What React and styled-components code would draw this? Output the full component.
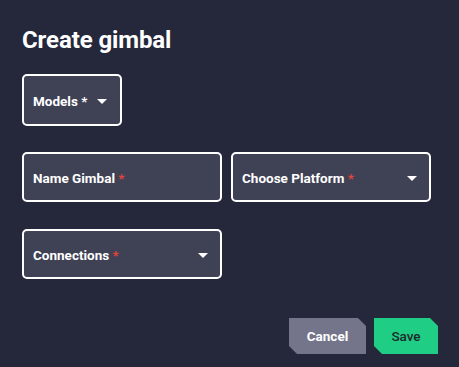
import React from "react";
import styled, { createGlobalStyle } from "styled-components";

const GlobalStyle = createGlobalStyle`
  html, body {
    margin: 0;
    padding: 0;
    background: #25273b;
  }
  body {
    font-family: Roboto, "Liberation Sans", sans-serif;
  }
`;

const Page = styled.div`
  width: 459px;
  height: 367px;
  box-sizing: border-box;
  padding: 26px 22px 0 22px;
  background: #25273b;
  display: flex;
  flex-direction: column;
`;

const Title = styled.h1`
  margin: 0;
  color: #ffffff;
  font-size: 24px;
  font-weight: 700;
  line-height: 28px;
  letter-spacing: -0.1px;
`;

const Row = styled.div`
  display: flex;
  gap: 9px;
  margin-top: ${(p) => p.top}px;
`;

const Field = styled.div`
  box-sizing: border-box;
  width: ${(p) => p.width}px;
  height: ${(p) => p.height}px;
  border: 2px solid #ffffff;
  border-radius: 5px;
  background: #3f4155;
  display: flex;
  align-items: center;
  justify-content: ${(p) => (p.tight ? "flex-start" : "space-between")};
  gap: ${(p) => (p.tight ? "10px" : "0")};
  padding: 1px 12px 0 9px;
  color: #ffffff;
  font-size: 13.5px;
  font-weight: 700;
  white-space: nowrap;
`;

const Req = styled.span`
  color: #e0443e;
`;

const Caret = styled.span`
  flex: none;
  width: 0;
  height: 0;
  border-left: 5px solid transparent;
  border-right: 5px solid transparent;
  border-top: 5px solid #ffffff;
  margin-top: 1px;
`;

const Actions = styled.div`
  display: flex;
  justify-content: flex-end;
  gap: 8px;
  margin-top: 39px;
  margin-right: -1px;
`;

const Button = styled.button`
  border: none;
  width: ${(p) => p.width}px;
  height: 36px;
  background: ${(p) => p.bg};
  color: ${(p) => p.fg};
  font-family: Roboto, "Liberation Sans", sans-serif;
  font-size: 13.5px;
  font-weight: ${(p) => p.weight};
  clip-path: polygon(0 0, calc(100% - 8px) 0, 100% 8px, 100% 100%, 8px 100%, 0 calc(100% - 8px));
  padding: 0;
  cursor: pointer;
`;

export default function App() {
  return (
    <>
      <GlobalStyle />
      <Page>
        <Title>Create gimbal</Title>
        <Row top={20}>
          <Field width={100} height={52} tight>
            <span>Models *</span>
            <Caret />
          </Field>
        </Row>
        <Row top={26}>
          <Field width={200} height={50}>
            <span>
              Name Gimbal <Req>*</Req>
            </span>
          </Field>
          <Field width={200} height={50}>
            <span>
              Choose Platform <Req>*</Req>
            </span>
            <Caret />
          </Field>
        </Row>
        <Row top={27}>
          <Field width={200} height={50}>
            <span>
              Connections <Req>*</Req>
            </span>
            <Caret />
          </Field>
        </Row>
        <Actions>
          <Button width={77} bg="#74758a" fg="#ffffff" weight={700}>
            Cancel
          </Button>
          <Button width={64} bg="#1fcd85" fg="#1d2a2a" weight={500}>
            Save
          </Button>
        </Actions>
      </Page>
    </>
  );
}
